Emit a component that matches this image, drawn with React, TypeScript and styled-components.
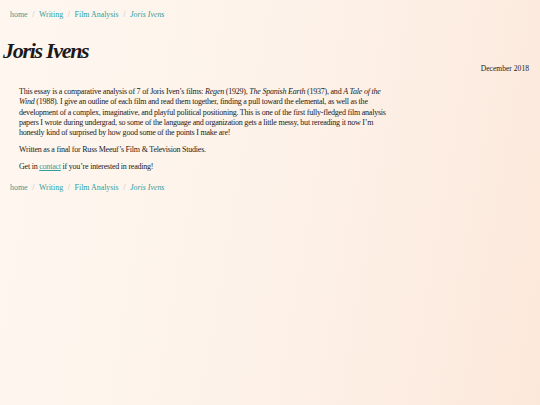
import React from 'react';
import styled, { createGlobalStyle } from 'styled-components';

const GlobalStyle = createGlobalStyle`
  html, body {
    margin: 0;
    padding: 0;
  }
  body {
    min-height: 100vh;
    background: linear-gradient(100deg, #fef7f0 0%, #fdf2e9 50%, #fce8db 100%);
    font-family: "Liberation Serif", "DejaVu Serif", serif;
    color: #1d1a18;
  }
`;

const Page = styled.div`
  padding: 10px 10px 0 10px;
`;

const Crumbs = styled.nav`
  font-size: 7.9px;
  display: flex;
  gap: 4.6px;
  align-items: baseline;
`;

const Crumb = styled.a<{ $current?: boolean }>`
  color: #2f9e9c;
  text-decoration: none;
  font-style: ${(p) => (p.$current ? 'italic' : 'normal')};

  &:visited {
    color: #2f9e9c;
  }
`;

const Sep = styled.span`
  color: #a7bfbd;
`;

const Header = styled.header`
  display: flex;
  justify-content: space-between;
  align-items: flex-end;
  margin: 17px 1px 0 -7px;
`;

const Title = styled.h1`
  margin: 0;
  font-size: 22px;
  font-style: italic;
  font-weight: bold;
  letter-spacing: -1.3px;
  line-height: 30px;
`;

const DateLine = styled.div`
  font-size: 7.6px;
  margin-bottom: -7px;
`;

const Body = styled.div`
  padding: 21px 0 0 9px;
  width: 372px;
  font-size: 8px;
  letter-spacing: -0.22px;
  line-height: 10.3px;
`;

const Para = styled.p`
  margin: 0 0 6.5px 0;
`;

const Link = styled.a`
  color: #2f9e9c;
  text-decoration: underline;
`;

const Footer = styled.div`
  margin-top: 11px;
`;

const Breadcrumbs = () => (
  <Crumbs>
    <Crumb href="#">home</Crumb>
    <Sep>/</Sep>
    <Crumb href="#">Writing</Crumb>
    <Sep>/</Sep>
    <Crumb href="#">Film Analysis</Crumb>
    <Sep>/</Sep>
    <Crumb href="#" $current>Joris Ivens</Crumb>
  </Crumbs>
);

const App = () => (
  <>
    <GlobalStyle />
    <Page>
      <Breadcrumbs />
      <Header>
        <Title>Joris Ivens</Title>
        <DateLine>December 2018</DateLine>
      </Header>
      <Body>
        <Para>
          This essay is a comparative analysis of 7 of Joris Iven’s films: <i>Regen</i> (1929), <i>The Spanish Earth</i> (1937), and <i>A Tale of the Wind</i> (1988). I give an outline of each film and read them together, finding a pull toward the elemental, as well as the development of a complex, imaginative, and playful political positioning. This is one of the first fully-fledged film analysis papers I wrote during undergrad, so some of the language and organization gets a little messy, but rereading it now I’m honestly kind of surprised by how good some of the points I make are!
        </Para>
        <Para>Written as a final for Russ Meeuf’s Film &amp; Television Studies.</Para>
        <Para>
          Get in <Link href="#">contact</Link> if you’re interested in reading!
        </Para>
      </Body>
      <Footer>
        <Breadcrumbs />
      </Footer>
    </Page>
  </>
);

export default App;
